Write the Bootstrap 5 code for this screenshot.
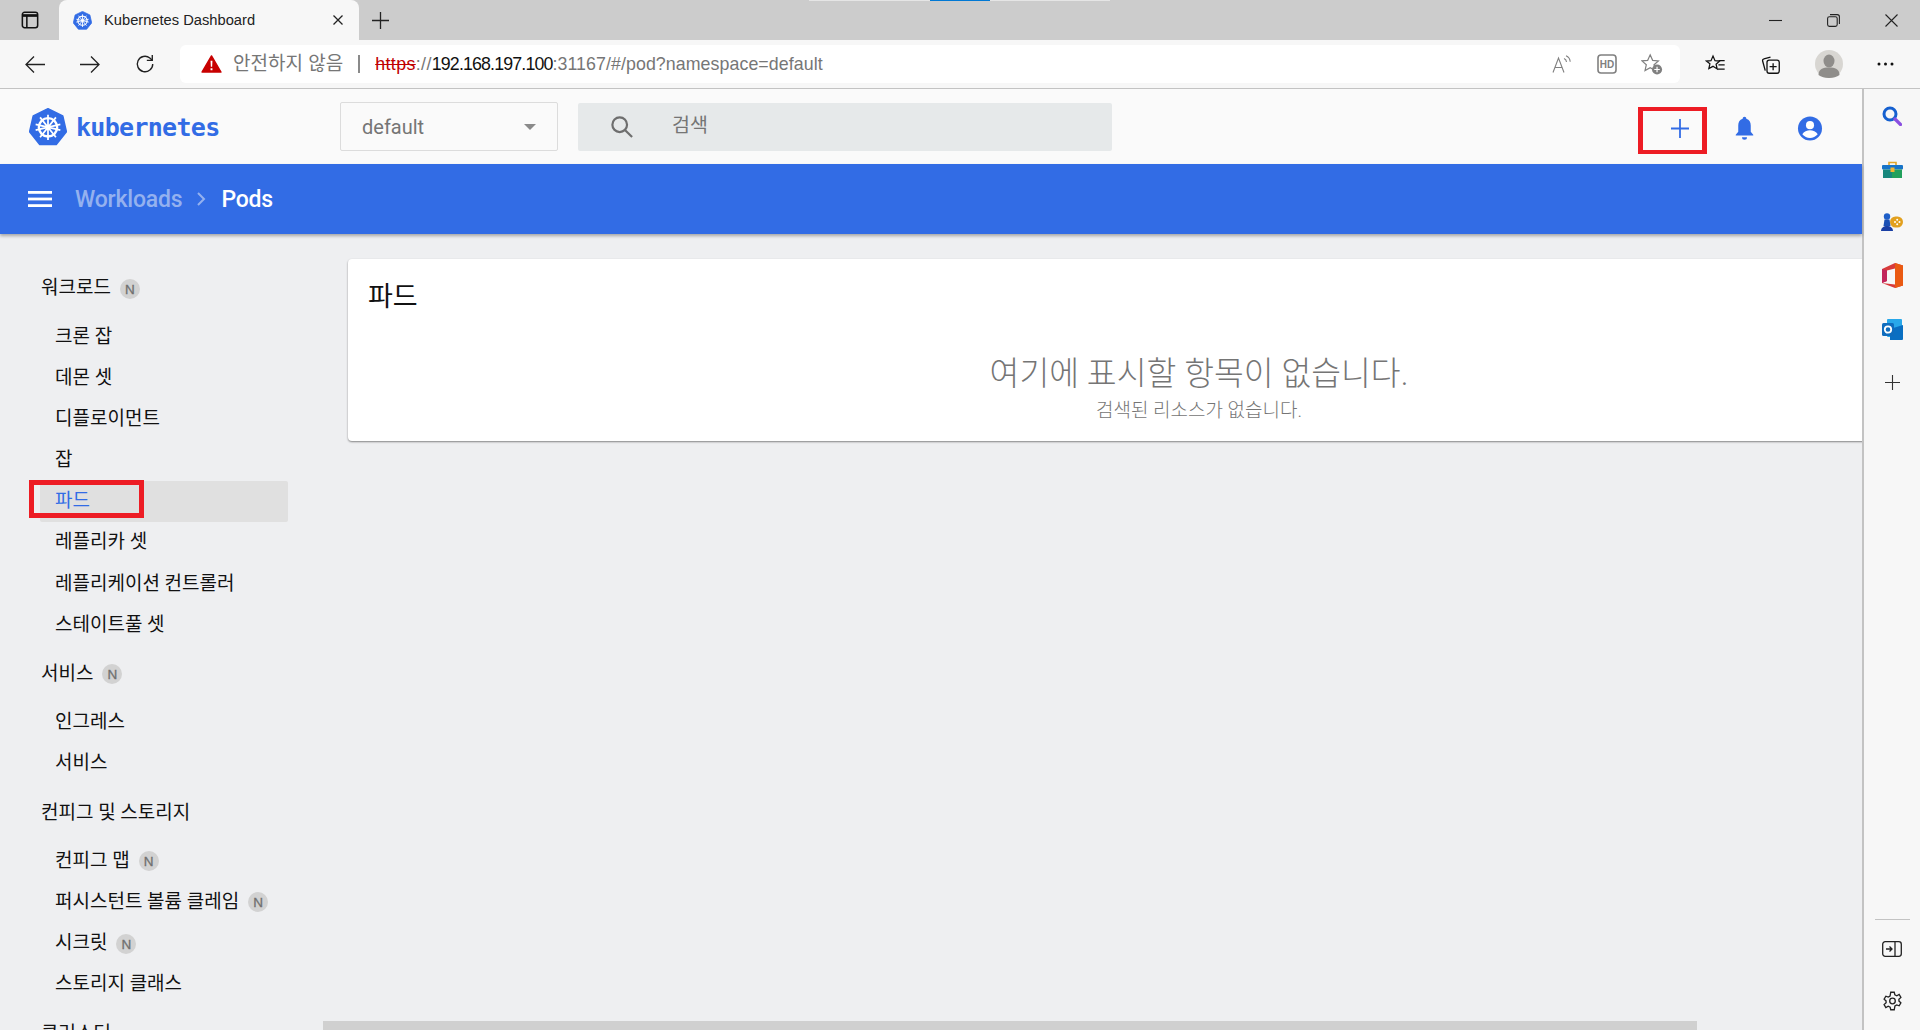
<!DOCTYPE html>
<html lang="ko">

<head>
    <meta charset="utf-8">
    <title>Kubernetes Dashboard</title>
    <link rel="stylesheet" href="https://cdn.jsdelivr.net/npm/bootstrap@5.3.0/dist/css/bootstrap.min.css">
    <style>
        html, body {
            height: 100%;
            overflow: hidden;
        }

        body {
            font-family: "Roboto", "Noto Sans CJK KR", sans-serif;
            background-color: #eeeff1;
            color: #111;
        }

        svg {
            display: block;
        }

        /* browser chrome */
        .tab-strip {
            height: 40px;
            background-color: #cccccc;
        }

        .strip-btn {
            width: 59px;
        }

        .browser-tab {
            width: 300px;
            height: 40px;
            background-color: #f7f7f7;
            border-radius: 8px 8px 0 0;
            padding: 0 16px 0 14px;
            font-family: "Liberation Sans", "Noto Sans CJK KR", sans-serif;
            font-size: 14.7px;
            color: #222;
        }

        .tab-title {
            margin-left: 12px;
        }

        .new-tab {
            width: 42px;
        }

        .win-btn {
            width: 58px;
        }

        .progress-line {
            width: 301px;
            height: 1px;
            margin-left: 408px;
            background-color: #e5e5e5;
        }

        .progress-line div {
            width: 60px;
            height: 1px;
            background-color: #0078d4;
        }

        .tool-row {
            height: 49px;
            background-color: #f7f7f7;
            border-bottom: 1px solid #c3c3c3;
        }

        .tool-btn {
            width: 55px;
        }

        .tool-first {
            margin-left: 7px;
        }

        .tool-after-omni {
            margin-left: 8px;
        }

        .tool-avatar {
            margin-left: 3px;
        }

        .tool-dots {
            margin-left: 2px;
        }

        .omnibox {
            width: 1500px;
            height: 38px;
            margin-left: 8px;
            background-color: #fff;
            border-radius: 6px;
            padding: 0 6px 0 21px;
            font-family: "Liberation Sans", "Noto Sans CJK KR", sans-serif;
            color: #767676;
            white-space: nowrap;
        }

        .not-secure {
            margin-left: 11px;
            font-size: 19px;
        }

        .omni-sep {
            width: 2px;
            height: 18px;
            background-color: #8a8a8a;
            margin: 0 15px;
        }

        .url-text {
            font-size: 17.8px;
            letter-spacing: .07px;
        }

        .url-proto {
            letter-spacing: .4px;
        }

        .url-scheme {
            color: #c00000;
            text-decoration: line-through;
        }

        .url-host {
            color: #111;
            letter-spacing: -.85px;
        }

        .omni-btn {
            width: 45px;
        }

        /* page + edge sidebar */
        .window-body {
            height: 941px;
        }

        .dash-frame {
            width: 1862px;
            min-width: 0;
        }

        .edge-bar {
            width: 58px;
            height: 941px;
            background-color: #f7f7f7;
            border-left: 2px solid #c3c3c3;
            padding-bottom: 3px;
        }

        .edge-btn {
            height: 53.4px;
        }

        .edge-rule {
            width: 35px;
            height: 1px;
            background-color: #c3c3c3;
            margin-top: auto;
            margin-bottom: 3px;
        }

        .edge-btn-low {
            height: 52px;
        }

        .dash-top {
            height: 75px;
            background-color: #fafafa;
        }

        .brand-box {
            width: 340px;
            padding-left: 29px;
        }

        .brand-name {
            font-family: "DejaVu Sans Mono", monospace;
            font-size: 25px;
            font-weight: 700;
            color: #326ce5;
            letter-spacing: -0.7px;
            margin: 2px 0 0 9px;
        }

        .ns-select {
            width: 218px;
            height: 49px;
            background-color: #fafafa;
            border: 1px solid #dcdcdc;
            border-radius: 2px;
            padding: 0 21px 0 21px;
            font-size: 20px;
            color: #757575;
        }

        .ns-caret {
            width: 0;
            height: 0;
            border-left: 6px solid transparent;
            border-right: 6px solid transparent;
            border-top: 6px solid #8a8a8a;
        }

        .search-box {
            width: 534px;
            height: 48px;
            margin-left: 20px;
            background-color: #e6e9ea;
            border-radius: 2px;
            padding-left: 33px;
            font-size: 19.5px;
            color: #757575;
        }

        .search-box span {
            margin-left: 39px;
            margin-bottom: 1px;
        }

        .create-box {
            width: 69px;
            height: 47px;
            margin-top: 7px;
            margin-right: 5px;
            border: 5px solid #ed1c24;
            border-width: 4px 5px;
            padding: 0 0 4px 28px;
        }

        .top-icon {
            width: 65px;
            margin-top: 3px;
        }

        .top-icon-last {
            margin-right: 20px;
        }

        .dash-crumbs {
            height: 70px;
            background-color: #326ce5;
            box-shadow: 0 2px 3px rgba(0, 0, 0, .3);
            padding-left: 28px;
            font-size: 23px;
            font-weight: 500;
            letter-spacing: -0.2px;
            color: #fff;
            position: relative;
            z-index: 1;
        }

        .crumb-text {
            margin-top: 2px;
        }

        .crumb-link {
            margin-left: 23px;
            color: #94b1ef;
        }

        .crumb-sep {
            margin: 0 15px 0 15px;
        }

        .dash-body {
            flex: 1;
            min-height: 0;
            position: relative;
            overflow: hidden;
        }

        /* left menu */
        .side-menu {
            width: 348px;
            flex: none;
            padding: 34px 0 0 40px;
        }

        .side-list {
            width: 248px;
        }

        .side-row {
            height: 41.14px;
            font-size: 19px;
            color: #111;
            white-space: nowrap;
        }

        .side-head {
            padding-left: 1px;
        }

        .side-head.next-in {
            margin-top: 8px;
        }

        .side-sub {
            margin-top: 7.4px;
        }

        .side-item {
            padding-left: 15px;
            border-radius: 2px;
        }

        .side-item.current {
            background-color: #e0e0e0;
            color: #326ce5;
        }

        .new-dot {
            width: 20px;
            height: 20px;
            margin-left: 9px;
            border-radius: 50%;
            background-color: #d2d2d2;
            color: #6f6f6f;
            font-family: "Liberation Sans", sans-serif;
            font-size: 13.5px;
            font-weight: 400;
            -webkit-text-stroke: .3px #6f6f6f;
            line-height: 21px;
            text-align: center;
        }

        .red-mark {
            position: absolute;
            left: -11px;
            top: -1px;
            width: 115px;
            height: 38px;
            border: 5px solid #ed1c24;
        }

        /* pods card */
        .pods-card {
            flex: none;
            width: 1702px;
            height: 182px;
            margin-top: 25px;
            border: 0;
            border-radius: 4px;
            box-shadow: 0 1px 2px rgba(0, 0, 0, .45);
        }

        .pods-title {
            padding: 21px 0 0 20px;
            font-size: 27px;
            line-height: 34px;
            color: #111;
        }

        .empty-title {
            margin-top: 38px;
            font-size: 32.4px;
            font-weight: 300;
            line-height: 44px;
            color: #757575;
        }

        .empty-sub {
            margin-top: 3px;
            font-size: 19px;
            font-weight: 300;
            line-height: 24px;
            color: #757575;
        }

        .h-thumb {
            position: absolute;
            left: 323px;
            right: 165px;
            bottom: 0;
            height: 9px;
            background-color: #d0d0d0;
        }
    </style>
</head>

<body>

    <!-- Tab strip -->
    <div class="tab-strip d-flex">
        <div class="strip-btn d-flex align-items-center justify-content-center">
            <svg width="18" height="18" viewBox="0 0 20 20" fill="none" stroke="#111" stroke-width="1.700"><rect x="1.500" y="1.500" width="17" height="17" rx="2.500"/><path d="M1.500 5h17" stroke-width="3"/><path d="M6.500 5v13.500"/></svg>
        </div>
        <div class="browser-tab d-flex align-items-center">
            <svg width="19" height="19" viewBox="0 0 24 24"><use href="#k8s-logo"/></svg>
            <span class="tab-title flex-grow-1">Kubernetes Dashboard</span>
            <svg width="10" height="10" viewBox="0 0 10 10" stroke="#222" stroke-width="1.300"><path d="M.5.500l9 9M9.500.500l-9 9"/></svg>
        </div>
        <div class="new-tab d-flex align-items-center justify-content-center">
            <svg width="17" height="17" viewBox="0 0 17 17" stroke="#222" stroke-width="1.300"><path d="M8.500 0v17M0 8.500h17"/></svg>
        </div>
        <div class="flex-grow-1">
            <div class="progress-line d-flex justify-content-center">
                <div></div>
            </div>
        </div>
        <div class="win-btn d-flex align-items-center justify-content-center">
            <svg width="13" height="13" viewBox="0 0 13 13" stroke="#222" stroke-width="1.100"><path d="M0 6.500h13"/></svg>
        </div>
        <div class="win-btn d-flex align-items-center justify-content-center">
            <svg width="13" height="13" viewBox="0 0 13 13" fill="none" stroke="#222" stroke-width="1.100"><rect x=".6" y="2.800" width="9.600" height="9.600" rx="1.800"/><path d="M3 .6h7.200a2.200 2.200 0 0 1 2.200 2.200V10"/></svg>
        </div>
        <div class="win-btn d-flex align-items-center justify-content-center">
            <svg width="13" height="13" viewBox="0 0 13 13" stroke="#222" stroke-width="1.100"><path d="M.5.500l12 12M12.500.500l-12 12"/></svg>
        </div>
    </div>

    <!-- Address row -->
    <div class="tool-row d-flex align-items-center">
        <div class="tool-btn tool-first d-flex justify-content-center">
            <svg width="20" height="17" viewBox="0 0 20 17" fill="none" stroke="#222" stroke-width="1.300"><path d="M20 8.500H1M9 .5l-8 8 8 8"/></svg>
        </div>
        <div class="tool-btn d-flex justify-content-center">
            <svg width="20" height="17" viewBox="0 0 20 17" fill="none" stroke="#222" stroke-width="1.300"><path d="M0 8.500h19M11 .5l8 8-8 8"/></svg>
        </div>
        <div class="tool-btn d-flex justify-content-center">
            <svg width="20" height="20" viewBox="0 0 22 22" fill="none" stroke="#222" stroke-width="1.500"><path d="M19.500 11a8.500 8.500 0 1 1-3.200-6.600L19 7"/><path d="M19 1v6h-6"/></svg>
        </div>
        <div class="omnibox d-flex align-items-center">
            <svg width="21" height="18" viewBox="0 0 22 19"><path d="M11 1L21 18H1z" fill="#c80000" stroke="#c80000" stroke-width="1.500" stroke-linejoin="round"/><path d="M10 6h2l-.3 6.500h-1.400zM10 14h2v2h-2z" fill="#fff"/></svg>
            <span class="not-secure">안전하지 않음</span>
            <span class="omni-sep"></span>
            <span class="url-text flex-grow-1"><span class="url-proto"><span class="url-scheme">https</span>://</span><span class="url-host">192.168.197.100</span>:31167/#/pod?namespace=default</span>
            <div class="omni-btn d-flex justify-content-center">
                <svg width="20" height="18" viewBox="0 0 20 18" fill="none" stroke="#808080" stroke-width="1.100"><path d="M1 17.500L6.500 3 12 17.500M3 12.500h7"/><path d="M12 3.500c1.500.6 2.400 1.800 2.500 3.500M14 .8c2.500 1 4 3.200 4.200 6"/></svg>
            </div>
            <div class="omni-btn d-flex justify-content-center">
                <svg width="20" height="20" viewBox="0 0 20 20" fill="none"><rect x="1" y="1" width="18" height="18" rx="3" stroke="#808080" stroke-width="1.600"/><text x="10" y="14" text-anchor="middle" font-family="Liberation Sans" font-size="10" font-weight="700" fill="#808080">HD</text></svg>
            </div>
            <div class="omni-btn d-flex justify-content-center">
                <svg width="22" height="22" viewBox="0 0 24 24" fill="none" stroke="#808080" stroke-width="1.300"><path d="M10 2l2.700 6 6.300.6-4.800 4.200 1.400 6.400L10 16l-5.600 3.200 1.400-6.400L1 8.600 7.300 8z"/><circle cx="17.500" cy="18" r="5.500" fill="#808080" stroke="none"/><path d="M17.500 15v6M14.500 18h6" stroke="#fff"/></svg>
            </div>
        </div>
        <div class="tool-btn tool-after-omni d-flex justify-content-center">
            <svg width="21" height="20" viewBox="0 0 24 24" fill="none" stroke="#111" stroke-width="1.500"><path d="M9 2.500l2.400 5.500 5.600.5-4.300 3.800 1.300 5.700L9 14.800l-5 2.700 1.300-5.700L1 8.500l5.600-.5z"/><path d="M16 8h7M15.500 13h7.500M14.500 18H23"/></svg>
        </div>
        <div class="tool-btn d-flex justify-content-center">
            <svg width="21" height="21" viewBox="0 0 24 24" fill="none" stroke="#111" stroke-width="1.500"><path d="M6 19L3 8a2 2 0 0 1 1.500-2.500L12 3.500"/><rect x="8" y="7" width="14" height="15" rx="2.500"/><path d="M15 10.500v8M11 14.500h8"/></svg>
        </div>
        <div class="tool-btn tool-avatar d-flex justify-content-center">
            <svg width="28" height="28" viewBox="0 0 28 28"><circle cx="14" cy="14" r="14" fill="#d8d6d2"/><ellipse cx="14" cy="11" rx="5.500" ry="6.500" fill="#8f8d8a"/><path d="M3.500 25c0-6 4.500-7.500 10.500-7.500S24.500 19 24.500 25C22 27 18 28 14 28s-8-1-10.500-3z" fill="#8f8d8a"/></svg>
        </div>
        <div class="tool-btn tool-dots d-flex justify-content-center">
            <svg width="17" height="4" viewBox="0 0 17 4" fill="#111"><circle cx="2" cy="2" r="1.500"/><circle cx="8.500" cy="2" r="1.500"/><circle cx="15" cy="2" r="1.500"/></svg>
        </div>
    </div>

    <div class="window-body d-flex">
        <div class="dash-frame d-flex flex-column">

            <!-- Dashboard header -->
            <div class="dash-top d-flex align-items-center">
                <div class="brand-box d-flex align-items-center">
                    <svg width="38" height="38" viewBox="0 0 24 24"><use href="#k8s-logo"/></svg>
                    <span class="brand-name">kubernetes</span>
                </div>
                <div class="ns-select d-flex align-items-center justify-content-between">
                    <span>default</span>
                    <span class="ns-caret"></span>
                </div>
                <div class="search-box d-flex align-items-center">
                    <svg width="22" height="22" viewBox="0 0 24 24" fill="none" stroke="#6e6e6e" stroke-width="2.400"><circle cx="9.500" cy="9.500" r="8"/><path d="M15.500 15.500L23 23"/></svg>
                    <span>검색</span>
                </div>
                <div class="create-box d-flex align-items-center ms-auto">
                    <svg width="18" height="19" viewBox="0 0 18 19" stroke="#326ce5" stroke-width="1.800"><path d="M9 0v19M0 9.500h18"/></svg>
                </div>
                <div class="top-icon d-flex justify-content-center">
                    <svg width="21" height="25" viewBox="0 0 22 30" fill="#326ce5"><path d="M11 1c1.300 0 2.200 1 2.200 2.300 3.800 1 5.300 4.300 5.300 8V19l3 3.500v1H.500v-1l3-3.500v-7.700c0-3.700 1.500-7 5.300-8C8.800 2 9.700 1 11 1z"/><path d="M8 25.500h6a3 3 0 0 1-6 0z"/></svg>
                </div>
                <div class="top-icon top-icon-last d-flex justify-content-center">
                    <svg width="26" height="25" viewBox="0 0 26 26"><circle cx="13" cy="13" r="12.500" fill="#326ce5"/><circle cx="13" cy="9.500" r="4.200" fill="#fff"/><path d="M5 19c1.500-3 5-4.200 8-4.200s6.500 1.200 8 4.200c-2 2.500-5 4-8 4s-6-1.500-8-4z" fill="#fff"/></svg>
                </div>
            </div>

            <!-- Breadcrumb bar -->
            <div class="dash-crumbs d-flex align-items-center">
                <svg width="24" height="16" viewBox="0 0 24 16" fill="#fff"><rect y="0" width="24" height="2.800"/><rect y="6.600" width="24" height="2.800"/><rect y="13.200" width="24" height="2.800"/></svg>
                <span class="crumb-text crumb-link">Workloads</span>
                <svg class="crumb-sep" width="9" height="14" viewBox="0 0 9 14" fill="none" stroke="#94b1ef" stroke-width="2"><path d="M1 1l6 6-6 6"/></svg>
                <span class="crumb-text">Pods</span>
            </div>

            <div class="dash-body d-flex">

                <!-- Left menu -->
                <div class="side-menu">
                    <div class="side-list" id="side-list"></div>
                </div>

                <!-- Pods card -->
                <div class="card pods-card">
                    <div class="pods-title">파드</div>
                    <div class="text-center">
                        <div class="empty-title">여기에 표시할 항목이 없습니다.</div>
                        <div class="empty-sub">검색된 리소스가 없습니다.</div>
                    </div>
                </div>

                <div class="h-thumb"></div>
            </div>
        </div>

        <!-- Edge sidebar -->
        <div class="edge-bar d-flex flex-column align-items-center">
            <div class="edge-btn d-flex align-items-center justify-content-center">
                <svg width="20" height="20" viewBox="0 0 20 20" fill="none"><circle cx="8" cy="8" r="6" stroke="#1560d0" stroke-width="3"/><path d="M13 13l5.500 5.500" stroke="#8a4fe0" stroke-width="3.200" stroke-linecap="round"/></svg>
            </div>
            <div class="edge-btn d-flex align-items-center justify-content-center">
                <svg width="21" height="17" viewBox="0 0 21 17"><path d="M7 5V1.500h7V5" fill="none" stroke="#e4a72a" stroke-width="1.600"/><rect x="0" y="4" width="21" height="4.500" rx="1" fill="#1874c8"/><rect x="1" y="8.500" width="10" height="8.500" fill="#17877c"/><rect x="10" y="8.500" width="10" height="8.500" fill="#21a05c"/><rect x="8.500" y="6.500" width="4" height="4.500" fill="#f2b632"/></svg>
            </div>
            <div class="edge-btn d-flex align-items-center justify-content-center">
                <svg width="22" height="18" viewBox="0 0 22 18"><rect x="9" y="3.500" width="13" height="11" rx="5.500" fill="#e2a01e"/><g fill="#fff"><circle cx="14" cy="9" r="1"/><circle cx="18.500" cy="9" r="1"/><circle cx="16.200" cy="6.800" r="1"/><circle cx="16.200" cy="11.200" r="1"/></g><circle cx="6" cy="3.500" r="3.200" fill="#1f5fc8"/><path d="M3.500 6.500h5l1 6.500h-7z" fill="#1b50b4"/><path d="M0 18c0-3 2.500-5 6-5s6 2 6 5z" fill="#1a3fa4"/></svg>
            </div>
            <div class="edge-btn d-flex align-items-center justify-content-center">
                <svg width="21" height="25" viewBox="0 0 21 25"><path d="M0 6L13 0l8 2.500v20L13 25 0 20l13 1.500V5.500l-8 2V18l-5 2z" fill="#d83b3b"/><path d="M13 0l8 2.500v20L13 25V21.500L13 5.500z" fill="#ea5a12"/><path d="M0 6l5 1.500V18l-5 2z" fill="#c2255c"/></svg>
            </div>
            <div class="edge-btn d-flex align-items-center justify-content-center">
                <svg width="21" height="21" viewBox="0 0 21 21"><rect x="5" y="0" width="15" height="18" rx="1" fill="#28a8ea"/><path d="M8 10l13-4v14a1 1 0 0 1-1 1H8z" fill="#0a6fc2"/><rect x="0" y="4" width="12" height="13" rx="1.500" fill="#0f6cbd"/><circle cx="6" cy="10.500" r="3.200" fill="none" stroke="#fff" stroke-width="1.800"/></svg>
            </div>
            <div class="edge-btn d-flex align-items-center justify-content-center">
                <svg width="15" height="15" viewBox="0 0 15 15" stroke="#333" stroke-width="1.100"><path d="M7.500 0v15M0 7.500h15"/></svg>
            </div>
            <div class="edge-rule"></div>
            <div class="edge-btn-low d-flex align-items-center justify-content-center">
                <svg width="20" height="16" viewBox="0 0 20 16" fill="none" stroke="#222" stroke-width="1.300"><rect x=".7" y=".7" width="18.600" height="14.600" rx="2.500"/><path d="M13 1v14"/><path d="M4 8h6M7.500 5.500L10 8l-2.500 2.500"/></svg>
            </div>
            <div class="edge-btn-low d-flex align-items-center justify-content-center">
                <svg width="21" height="22" viewBox="0 0 24 24" fill="none" stroke="#222" stroke-width="1.500"><circle cx="12" cy="12" r="3.200"/><path d="M10 2h4l.7 3 2.200 1 2.700-1.500 2 3.400-2.300 2 .1 2.200 2.200 2-2 3.400-2.800-1-2 1.200L14 22h-4l-.7-3-2.200-1-2.700 1.500-2-3.400 2.300-2-.1-2.200-2.200-2 2-3.400 2.800 1 2-1.200z"/></svg>
            </div>
        </div>
    </div>

    <!-- Shared logo -->
    <svg width="0" height="0" class="position-absolute">
        <defs>
            <g id="k8s-logo">
                <path d="M12 .5l9.300 4.500 2.300 10-6.400 8H6.800l-6.400-8 2.300-10z" fill="#326ce5" stroke="#326ce5" stroke-linejoin="round"/>
                <g fill="none" stroke="#fff">
                    <circle cx="12" cy="12.200" r="5.800" stroke-width="1.500"/>
                    <path stroke-width="1.100" d="M12 4.200v16M4.200 10.400l15.600 3.600M19.800 10.400L4.200 14M7 5.900l10 12.600M17 5.900L7 18.500"/>
                </g>
                <circle cx="12" cy="12.200" r="1.500" fill="#fff"/>
            </g>
        </defs>
    </svg>

    <script>
        const menu = [
            { title: "워크로드", isNew: true, items: [
                { name: "크론 잡" }, { name: "데몬 셋" }, { name: "디플로이먼트" }, { name: "잡" },
                { name: "파드", current: true }, { name: "레플리카 셋" },
                { name: "레플리케이션 컨트롤러" }, { name: "스테이트풀 셋" }
            ] },
            { title: "서비스", isNew: true, items: [{ name: "인그레스" }, { name: "서비스" }] },
            { title: "컨피그 및 스토리지", items: [
                { name: "컨피그 맵", isNew: true }, { name: "퍼시스턴트 볼륨 클레임", isNew: true },
                { name: "시크릿", isNew: true }, { name: "스토리지 클래스" }
            ] },
            { title: "클러스터", items: [] }
        ];

        const dot = '<span class="new-dot">N</span>';
        let html = "";
        menu.forEach((group, i) => {
            html += `<div class="side-row side-head d-flex align-items-center ${i ? "next-in" : ""}">${group.title}${group.isNew ? dot : ""}</div>`;
            html += '<div class="side-sub">';
            group.items.forEach(item => {
                html += `<div class="side-row side-item d-flex align-items-center position-relative ${item.current ? "current" : ""}">${item.name}${item.isNew ? dot : ""}${item.current ? '<span class="red-mark"></span>' : ""}</div>`;
            });
            html += "</div>";
        });
        document.getElementById("side-list").innerHTML = html;
    </script>

</body>

</html>
